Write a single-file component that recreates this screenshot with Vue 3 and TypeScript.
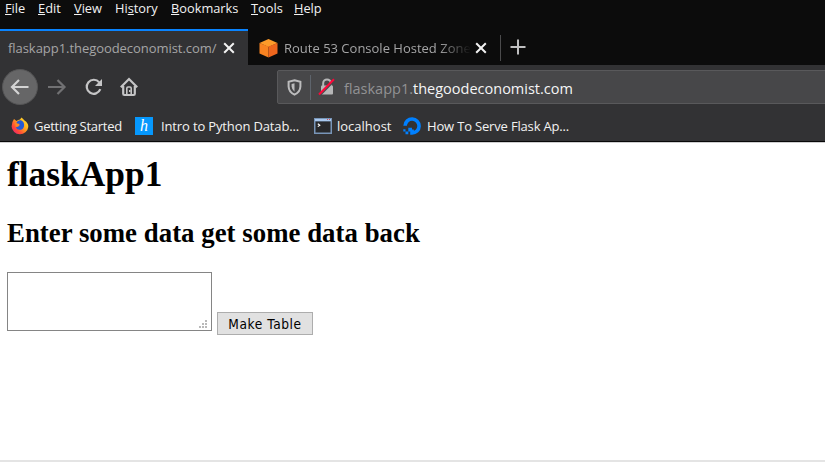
<script setup lang="ts">
interface MenuItem { name: string; letter: number; width: number }
const menus: MenuItem[] = [
  { name: 'File', letter: 0, width: 33 },
  { name: 'Edit', letter: 0, width: 36 },
  { name: 'View', letter: 0, width: 41 },
  { name: 'History', letter: 2, width: 56 },
  { name: 'Bookmarks', letter: 0, width: 80 },
  { name: 'Tools', letter: 0, width: 43 },
  { name: 'Help', letter: 0, width: 40 },
]
</script>

<template>
  <div class="window">
    <nav class="menubar">
      <span v-for="m in menus" :key="m.name" class="menu" :style="{ width: m.width + 'px' }">{{ m.name.slice(0, m.letter) }}<u>{{ m.name[m.letter] }}</u>{{ m.name.slice(m.letter + 1) }}</span>
    </nav>
    <div class="tabs">
      <div class="tab active">
        <span class="tab-title first">flaskapp1.thegoodeconomist.com/</span>
        <svg class="close" width="12" height="12" viewBox="0 0 12 12"><path d="M1.2 1.2 10.8 10.8M10.8 1.2 1.2 10.8" /></svg>
      </div>
      <div class="tab second-tab">
        <svg class="cube" width="19" height="19" viewBox="0 0 19 19">
          <path d="M9.5 0 18.5 4 9.5 8 .5 4z" fill="#fd9b2a" />
          <path d="M.5 4 9.5 7.6V18.6L.5 14.5z" fill="#f98321" />
          <path d="M18.5 4 9.5 7.6V18.6L18.5 14.5z" fill="#ee661d" />
        </svg>
        <span class="tab-title second">Route 53 Console Hosted Zone</span>
        <svg class="close" width="12" height="12" viewBox="0 0 12 12"><path d="M1.2 1.2 10.8 10.8M10.8 1.2 1.2 10.8" /></svg>
      </div>
      <svg class="plus" width="16" height="16" viewBox="0 0 16 16"><path d="M8 .5V15.5M.5 8H15.5" /></svg>
    </div>
    <div class="toolbar">
      <div class="back">
        <svg width="20" height="18" viewBox="0 0 20 18"><path d="M18.5 9H2.5M9 2 2 9l7 7" /></svg>
      </div>
      <svg class="forward" width="20" height="18" viewBox="0 0 20 18"><path d="M1 9H17.5M10.5 2l7 7-7 7" /></svg>
      <svg class="reload" width="18" height="18" viewBox="0 0 18 18"><path d="M15.3 11.2A7 7 0 1 1 14.2 4.4" /><path class="solid" d="M17 1V8H10z" /></svg>
      <svg class="home" width="20" height="20" viewBox="0 0 20 20"><path d="M1.8 10.2 10 2l8.2 8.2M4.2 9V16.8Q4.2 18 5.4 18H14.6Q15.8 18 15.8 16.8V9" /><path class="door" d="M7.8 17.5V11.2Q7.8 10 9 10H11Q12.2 10 12.2 11.2V17.5" /><path class="solid" d="M10 13h1.5v2H10z" /></svg>
      <div class="urlbar">
        <svg class="shield" width="15" height="17" viewBox="0 0 15 17"><path d="M7.5 1.2 13.4 2.7V7.5Q13.2 13 7.5 15.6 1.8 13 1.6 7.5V2.7z" /><path class="half" d="M7.5 4.3V12.7Q4.8 10.8 4.6 7.5V5z" /></svg>
        <i class="divider"></i>
        <svg class="lock" width="18" height="18" viewBox="0 0 18 18"><path class="body" d="M3 8.5Q3 7.5 4 7.5H14Q15 7.5 15 8.5V15.5Q15 16.5 14 16.5H4Q3 16.5 3 15.5z" /><path class="shackle" d="M5.2 8V5.2a3.8 3.8 0 0 1 7.6 0V8" /><path class="gap" d="M2 17.5 17 2.2" /><path class="slash" d="M1 16.5 16 1.2" /></svg>
        <span class="address">flaskapp1.<b>thegoodeconomist.com</b></span>
      </div>
    </div>
    <div class="bookmarks">
      <svg class="firefox" width="18" height="18" viewBox="0 0 18 18">
        <defs><linearGradient id="flame" x1="1" y1="0" x2="0" y2="1"><stop offset="0" stop-color="#fff13a" /><stop offset=".4" stop-color="#ffab1c" /><stop offset=".7" stop-color="#ff4a37" /><stop offset="1" stop-color="#e31587" /></linearGradient></defs>
        <path d="M3 2 5.5 4Q7 2.5 9 2.5L10.5.5Q12.2 2 13.5 3.5 17.5 6 17.3 10A8.4 8.4 0 0 1 .6 9.5Q.7 5 3 2z" fill="url(#flame)" />
        <path d="M5.3 6Q6.5 2.8 10 3.3 13.7 5 13 9.2A4.4 4.4 0 0 1 4.8 10.5L8.7 8.7z" fill="#245bd5" />
        <path d="M4.2 6.1 8.8 7 7.2 9.2 4.8 10z" fill="#ff8a20" />
      </svg>
      <span class="b1">Getting Started</span>
      <span class="h-logo">h</span>
      <span class="b2">Intro to Python Datab...</span>
      <svg class="terminal" width="18" height="16" viewBox="0 0 18 16"><path d="M0 0H18V16H0z" fill="#7895b8" /><path d="M1 1H17V3H1z" fill="#a9c8ee" /><path d="M13 1h1v1h-1M15 1h1v1h-1" fill="#c95363" /><path d="M1.5 3.5H16.5V14.5H1.5z" fill="#28292b" /><path d="m3.8 5.8 2 1.4-2 1.4" fill="none" stroke="#fff" stroke-width="1.1" /></svg>
      <span class="b3">localhost</span>
      <svg class="ocean" width="18" height="18" viewBox="0 0 18 18"><path d="M2.1 8.8A7 7 0 1 1 9 16V12.5" fill="none" stroke="#0080ff" stroke-width="3.6" /><path d="M5.3 10.8H9V14.4H5.3zM2.5 14.4H5.3V17.2H2.5zM.3 12.2H2.5V14.4H.3z" fill="#0080ff" /></svg>
      <span class="b4">How To Serve Flask Ap...</span>
    </div>
    <main>
      <h1>flaskApp1</h1>
      <h2>Enter some data get some data back</h2>
      <form @submit.prevent>
        <div class="field">
          <textarea aria-label="Data"></textarea>
          <svg class="grip" width="10" height="10" viewBox="0 0 10 10"><path d="M7 1h2v2H7zM4 4h2v2H4zM7 4h2v2H7zM1 7h2v2H1zM4 7h2v2H4zM7 7h2v2H7z" /></svg>
        </div>
        <button>Make Table</button>
      </form>
    </main>
  </div>
</template>

<style>
body { margin: 0; background: #fff; }
</style>
<style scoped>
* { box-sizing: border-box; }
svg { display: block; flex: none; fill: none; }
.window { width: 825px; height: 462px; display: flex; flex-direction: column; overflow: hidden; background: #fff; font-family: "Open Sans", "Noto Sans", sans-serif; white-space: nowrap; }
.menubar { height: 29px; flex: none; display: flex; padding-left: 5px; background: #0c0c0c; color: #f2f2f2; font-size: 12.8px; line-height: 16px; }
.menu { flex: none; }
.menu u { text-underline-offset: 1px; text-decoration-thickness: 1px; }
.tabs { height: 36px; flex: none; display: flex; align-items: center; background: #0c0c0c; }
.tab { height: 36px; display: flex; align-items: center; flex: none; font-size: 13px; color: #a5a5a6; }
.active { width: 248px; background: #323234; border-top: 2px solid #0a84ff; padding-left: 8px; }
.second-tab { width: 253px; padding: 2px 0 0 11px; }
.second-tab::after { content: ""; height: 26px; width: 1px; background: #4b4b4c; margin-left: 13px; }
.tab-title { flex: none; }
.first { width: 215px; letter-spacing: -.05px; }
.second { width: 186px; margin: 0 5px 0 6px; -webkit-mask-image: linear-gradient(90deg, #000 155px, transparent 187px); mask-image: linear-gradient(90deg, #000 155px, transparent 187px); }
.close path { stroke: #f2f2f2; stroke-width: 2; }
.plus { margin-left: 9px; }
.plus path { stroke: #bfbfc0; stroke-width: 2; }
.toolbar { height: 44px; flex: none; display: flex; align-items: center; background: #323234; padding-left: 2px; }
.back { flex: none; width: 36px; height: 36px; border-radius: 50%; background: #666667; display: grid; place-items: center; border: 1px solid #555556; }
.back path, .forward path { stroke: #d4d4d4; stroke-width: 2.2; }
.forward { margin-left: 9px; }
.forward path { stroke: #717173; }
.reload { margin-left: 18px; }
.reload path, .home path { stroke: #c5c5c6; stroke-width: 2.2; }
.reload .solid, .home .solid { fill: #c5c5c6; stroke: none; }
.home { margin-left: 16px; }
.home .door { stroke-width: 1.6; }
.urlbar { width: 560px; height: 34px; flex: none; margin-left: 138px; background: #474749; border: 1px solid #59595b; border-radius: 2px; display: flex; align-items: center; padding-left: 9px; }
.shield path { stroke: #bcbcbd; stroke-width: 2; }
.shield .half { fill: #bcbcbd; stroke: none; }
.divider { width: 1px; height: 25px; background: #5e646c; margin: 0 7px 0 8px; }
.lock .body { fill: #b6b6b7; }
.lock .shackle { stroke: #b6b6b7; stroke-width: 2; }
.lock .gap { stroke: #474749; stroke-width: 1.5; }
.lock .slash { stroke: #ff0639; stroke-width: 2; }
.address { color: #929294; font-size: 14.5px; margin: 2px 0 0 8px; }
.address b { color: #f5f5f6; font-weight: 400; }
.bookmarks { height: 33px; flex: none; display: flex; align-items: center; background: #323234; border-bottom: 1px solid #080808; box-shadow: 0 1px #cfcfd0; color: #f2f2f2; font-size: 13px; padding: 2px 0 0 11px; }
.bookmarks span { flex: none; }
.b1 { width: 101px; margin-left: 5px; letter-spacing: -.27px; }
.bookmarks .h-logo { width: 18px; height: 18px; background: #0698fd; color: #fff; font: italic 16px/18px "Liberation Serif", serif; text-align: center; }
.b2 { width: 150px; margin-left: 8px; letter-spacing: -.14px; }
.terminal { margin-left: 3px; }
.b3 { width: 61px; margin-left: 5px; }
.ocean { margin-left: 5px; }
.b4 { margin-left: 6px; letter-spacing: -.17px; }
main { flex: 1; padding: 12px 0 0 7px; border-bottom: 2px solid #e4e4e4; font-family: "Liberation Serif", serif; color: #000; }
h1 { margin: 0; font-size: 35.4px; line-height: 40px; }
h2 { margin: 24px 0 0; font-size: 26.8px; line-height: 30px; letter-spacing: .03px; }
form { display: flex; align-items: flex-end; margin-top: 24px; }
.field { position: relative; width: 205px; height: 59px; margin-bottom: 4px; }
textarea { display: block; width: 205px; height: 59px; resize: none; border: 1px solid #858585; background: #fff; outline: none; }
.grip { position: absolute; right: 4px; bottom: 2px; }
.grip path { fill: #b9b9b9; }
button { width: 96px; height: 23px; margin-left: 5px; padding: 0; border: 1px solid #adadad; background: #e1e1e1; color: #000; font: 13.6px "DejaVu Sans Condensed", "Noto Sans", sans-serif; letter-spacing: .6px; }
</style>
